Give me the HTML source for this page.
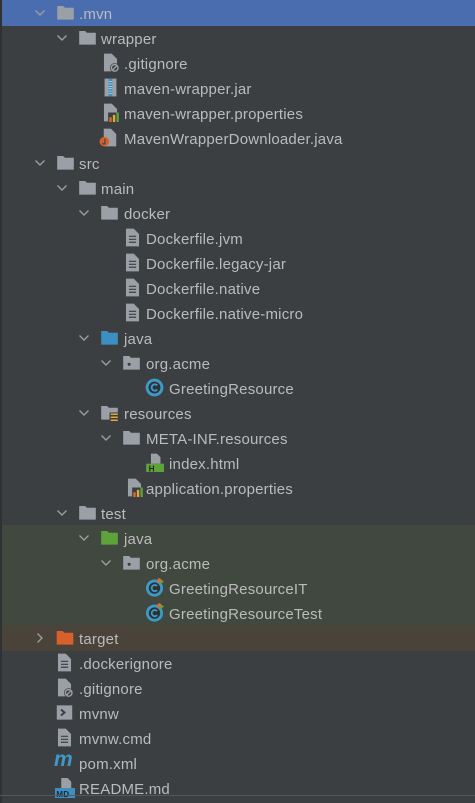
<!DOCTYPE html>
<html><head><meta charset="utf-8"><style>
html,body{margin:0;padding:0}
body{width:475px;height:803px;background:#3c3f41;position:relative;overflow:hidden;font-family:"Liberation Sans",sans-serif;font-size:15px;letter-spacing:0.2px;color:#bbbbbb}
.lb{position:absolute;left:0;top:0;width:2px;height:803px;background:#2f3133}
.bg{position:absolute;left:2px;right:0}
.r{position:absolute;left:0;right:0;height:25px;line-height:26px;white-space:nowrap}
.r span{position:absolute;top:2px}
.r svg{position:absolute;top:4px}
.bot{position:absolute;left:0;right:0;top:795px;height:1px;background:#55585b}
</style></head><body>
<svg width="0" height="0" style="position:absolute">
<defs>
<symbol id="chev" viewBox="0 0 12 12"><path d="M1.5 3.5 L6 8 L10.5 3.5" fill="none" stroke="#9a9da1" stroke-width="1.4"/></symbol>
<symbol id="chevr" viewBox="0 0 12 12"><path d="M3.5 1.5 L8 6 L3.5 10.5" fill="none" stroke="#9a9da1" stroke-width="1.4"/></symbol>
<symbol id="fold" viewBox="0 0 16 16"><path d="M1 2.5 H6 L7.5 4 H15 V14 H1 Z" fill="currentColor"/></symbol>
<symbol id="pkg" viewBox="0 0 16 16"><path d="M1 2.5 H6 L7.5 4 H15 V14 H1 Z" fill="#9aa0a6"/><circle cx="6" cy="9.5" r="1.3" fill="#3c3f41"/></symbol>
<symbol id="res" viewBox="0 0 16 16"><path d="M1 2.5 H6 L7.5 4 H15 V14 H1 Z" fill="#9aa0a6"/><rect x="8" y="8" width="8" height="8" fill="#3c3f41"/><path d="M9 9.5h6M9 12h6M9 14.5h6" stroke="#e0a93a" stroke-width="1.3"/></symbol>
<symbol id="file" viewBox="0 0 16 16"><path d="M2.5 0.5 H9 L13.5 5 V15.5 H2.5 Z" fill="#9aa0a6"/><path d="M5 7h6M5 9.5h6M5 12h6" stroke="#3c3f41" stroke-width="1"/></symbol>
<symbol id="git" viewBox="0 0 16 16"><path d="M2.5 0.5 H9 L13.5 5 V15.5 H2.5 Z" fill="#9aa0a6"/><circle cx="11.5" cy="12.5" r="4" fill="#3c3f41"/><circle cx="11.5" cy="12.5" r="2.8" fill="none" stroke="#9aa0a6" stroke-width="1.2"/><path d="M9.5 14.5 L13.5 10.5" stroke="#9aa0a6" stroke-width="1.2"/></symbol>
<symbol id="jar" viewBox="0 0 16 16"><rect x="3" y="0.5" width="10" height="15" fill="#9aa0a6"/><rect x="6.5" y="0.5" width="3" height="15" fill="#3d8fc1"/><path d="M6.5 3h3M6.5 5h3M6.5 7h3M6.5 9h3M6.5 11h3M6.5 13h3" stroke="#cfe3f0" stroke-width=".6"/></symbol>
<symbol id="props" viewBox="0 0 16 16"><path d="M2.5 0.5 H9 L13.5 5 V15.5 H2.5 Z" fill="#9aa0a6"/><rect x="6" y="8" width="10" height="8" fill="#3c3f41"/><rect x="7" y="12" width="2" height="4" fill="#e06a2c"/><rect x="10" y="10" width="2" height="6" fill="#e0a93a"/><rect x="13" y="8" width="2" height="8" fill="#5ea33a"/></symbol>
<symbol id="jfile" viewBox="0 0 16 16"><path d="M4 0.5 H10 L14.5 5 V15.5 H4 Z" fill="#9aa0a6"/><circle cx="4.5" cy="11.5" r="4" fill="#d5602c"/><path d="M5 9v3.5a1 1 0 0 1-2 0" fill="none" stroke="#3c3f41" stroke-width="1"/></symbol>
<symbol id="cls" viewBox="0 0 16 16"><circle cx="8" cy="8" r="7.5" fill="#3d9ac8"/><circle cx="8" cy="8" r="5" fill="#2f3133"/><path d="M10.3 6.2a2.7 2.7 0 1 0 0 3.6" fill="none" stroke="#3d9ac8" stroke-width="1.6"/></symbol>
<symbol id="tcls" viewBox="0 0 16 16"><circle cx="8" cy="8.5" r="7.2" fill="#3d9ac8"/><circle cx="8" cy="8.5" r="4.8" fill="#2f3133"/><path d="M10.2 6.8a2.6 2.6 0 1 0 0 3.4" fill="none" stroke="#3d9ac8" stroke-width="1.5"/><path d="M12 0 L16 3 L12 6Z" fill="#5ea33a"/><circle cx="12" cy="2" r="1.8" fill="#e06a2c"/></symbol>
<symbol id="html" viewBox="0 0 16 16"><path d="M5 0.5 H10 L13 3.5 V9 H5 Z" fill="#9aa0a6"/><rect x="1" y="9" width="15" height="7" fill="#5ea33a"/><text x="3" y="15.5" font-size="7" font-family="Liberation Sans" fill="#1e2a1a" font-weight="bold">H</text></symbol>
<symbol id="sh" viewBox="0 0 16 16"><rect x="1.5" y="2" width="13" height="12" fill="#9aa0a6"/><path d="M5 5.5 L8 8 L5 10.5" fill="none" stroke="#3c3f41" stroke-width="1.6"/></symbol>
<symbol id="md" viewBox="0 0 16 16"><path d="M5 0 H10 L13 3 V8 H5 Z" fill="#9aa0a6"/><rect x="0" y="8" width="16" height="8" fill="#3d8fc1"/><text x="1" y="15" font-size="6.5" font-family="Liberation Sans" fill="#1c2b38" font-weight="bold">MD</text></symbol>
</defs></svg>
<div class="lb"></div>
<div class="bg" style="top:0;height:26px;background:#4a6db0"></div>
<div class="bg" style="top:525px;height:100px;background:#404840"></div>
<div class="bg" style="top:625px;height:26px;background:#4a4339"></div>

<div class="r" style="top:0"><svg style="left:34px;top:7px" width="12" height="12"><use href="#chev"/></svg><svg style="left:56px;top:3px;color:#9aa0a6" width="19" height="19"><use href="#fold"/></svg><span style="left:79px">.mvn</span></div>
<div class="r" style="top:25px"><svg style="left:56px;top:7px" width="12" height="12"><use href="#chev"/></svg><svg style="left:78px;top:3px;color:#9aa0a6" width="19" height="19"><use href="#fold"/></svg><span style="left:101px">wrapper</span></div>
<div class="r" style="top:50px"><svg style="left:101px;top:3px" width="19" height="19"><use href="#git"/></svg><span style="left:124px">.gitignore</span></div>
<div class="r" style="top:75px"><svg style="left:101px;top:3px" width="19" height="19"><use href="#jar"/></svg><span style="left:124px">maven-wrapper.jar</span></div>
<div class="r" style="top:100px"><svg style="left:101px;top:3px" width="19" height="19"><use href="#props"/></svg><span style="left:124px">maven-wrapper.properties</span></div>
<div class="r" style="top:125px"><svg style="left:99px;top:3px" width="19" height="19"><use href="#jfile"/></svg><span style="left:124px">MavenWrapperDownloader.java</span></div>
<div class="r" style="top:150px"><svg style="left:34px;top:7px" width="12" height="12"><use href="#chev"/></svg><svg style="left:56px;top:3px;color:#9aa0a6" width="19" height="19"><use href="#fold"/></svg><span style="left:79px">src</span></div>
<div class="r" style="top:175px"><svg style="left:56px;top:7px" width="12" height="12"><use href="#chev"/></svg><svg style="left:78px;top:3px;color:#9aa0a6" width="19" height="19"><use href="#fold"/></svg><span style="left:101px">main</span></div>
<div class="r" style="top:200px"><svg style="left:78px;top:7px" width="12" height="12"><use href="#chev"/></svg><svg style="left:100px;top:3px;color:#9aa0a6" width="19" height="19"><use href="#fold"/></svg><span style="left:124px">docker</span></div>
<div class="r" style="top:225px"><svg style="left:123px;top:3px" width="19" height="19"><use href="#file"/></svg><span style="left:146px">Dockerfile.jvm</span></div>
<div class="r" style="top:250px"><svg style="left:123px;top:3px" width="19" height="19"><use href="#file"/></svg><span style="left:146px">Dockerfile.legacy-jar</span></div>
<div class="r" style="top:275px"><svg style="left:123px;top:3px" width="19" height="19"><use href="#file"/></svg><span style="left:146px">Dockerfile.native</span></div>
<div class="r" style="top:300px"><svg style="left:123px;top:3px" width="19" height="19"><use href="#file"/></svg><span style="left:146px">Dockerfile.native-micro</span></div>
<div class="r" style="top:325px"><svg style="left:78px;top:7px" width="12" height="12"><use href="#chev"/></svg><svg style="left:100px;top:3px;color:#3d8fc1" width="19" height="19"><use href="#fold"/></svg><span style="left:124px">java</span></div>
<div class="r" style="top:350px"><svg style="left:100px;top:7px" width="12" height="12"><use href="#chev"/></svg><svg style="left:122px;top:3px" width="19" height="19"><use href="#pkg"/></svg><span style="left:146px">org.acme</span></div>
<div class="r" style="top:375px"><svg style="left:145px;top:3px" width="19" height="19"><use href="#cls"/></svg><span style="left:169px">GreetingResource</span></div>
<div class="r" style="top:400px"><svg style="left:78px;top:7px" width="12" height="12"><use href="#chev"/></svg><svg style="left:100px;top:3px" width="19" height="19"><use href="#res"/></svg><span style="left:124px">resources</span></div>
<div class="r" style="top:425px"><svg style="left:100px;top:7px" width="12" height="12"><use href="#chev"/></svg><svg style="left:122px;top:3px;color:#9aa0a6" width="19" height="19"><use href="#fold"/></svg><span style="left:146px">META-INF.resources</span></div>
<div class="r" style="top:450px"><svg style="left:145px;top:3px" width="19" height="19"><use href="#html"/></svg><span style="left:169px">index.html</span></div>
<div class="r" style="top:475px"><svg style="left:125px;top:3px" width="19" height="19"><use href="#props"/></svg><span style="left:146px">application.properties</span></div>
<div class="r" style="top:500px"><svg style="left:56px;top:7px" width="12" height="12"><use href="#chev"/></svg><svg style="left:78px;top:3px;color:#9aa0a6" width="19" height="19"><use href="#fold"/></svg><span style="left:101px">test</span></div>
<div class="r" style="top:525px"><svg style="left:78px;top:7px" width="12" height="12"><use href="#chev"/></svg><svg style="left:100px;top:3px;color:#5ea33a" width="19" height="19"><use href="#fold"/></svg><span style="left:124px">java</span></div>
<div class="r" style="top:550px"><svg style="left:100px;top:7px" width="12" height="12"><use href="#chev"/></svg><svg style="left:122px;top:3px" width="19" height="19"><use href="#pkg"/></svg><span style="left:146px">org.acme</span></div>
<div class="r" style="top:575px"><svg style="left:145px;top:3px" width="19" height="19"><use href="#tcls"/></svg><span style="left:169px">GreetingResourceIT</span></div>
<div class="r" style="top:600px"><svg style="left:145px;top:3px" width="19" height="19"><use href="#tcls"/></svg><span style="left:169px">GreetingResourceTest</span></div>
<div class="r" style="top:625px"><svg style="left:34px;top:7px" width="12" height="12"><use href="#chevr"/></svg><svg style="left:55px;top:3px;color:#d8602c" width="20" height="19"><use href="#fold"/></svg><span style="left:79px">target</span></div>
<div class="r" style="top:650px"><svg style="left:55px;top:3px" width="19" height="19"><use href="#file"/></svg><span style="left:79px">.dockerignore</span></div>
<div class="r" style="top:675px"><svg style="left:55px;top:3px" width="19" height="19"><use href="#git"/></svg><span style="left:79px">.gitignore</span></div>
<div class="r" style="top:700px"><svg style="left:55px;top:3px" width="19" height="19"><use href="#sh"/></svg><span style="left:79px">mvnw</span></div>
<div class="r" style="top:725px"><svg style="left:55px;top:3px" width="19" height="19"><use href="#file"/></svg><span style="left:79px">mvnw.cmd</span></div>
<div class="r" style="top:750px"><span style="left:54px;color:#3d9ac8;font-weight:bold;font-style:italic;font-size:21px;top:-3px">m</span><span style="left:79px">pom.xml</span></div>
<div class="r" style="top:775px"><svg style="left:55px;top:3px" width="20" height="20"><use href="#md"/></svg><span style="left:79px">README.md</span></div>
<div class="bot"></div>
</body></html>
